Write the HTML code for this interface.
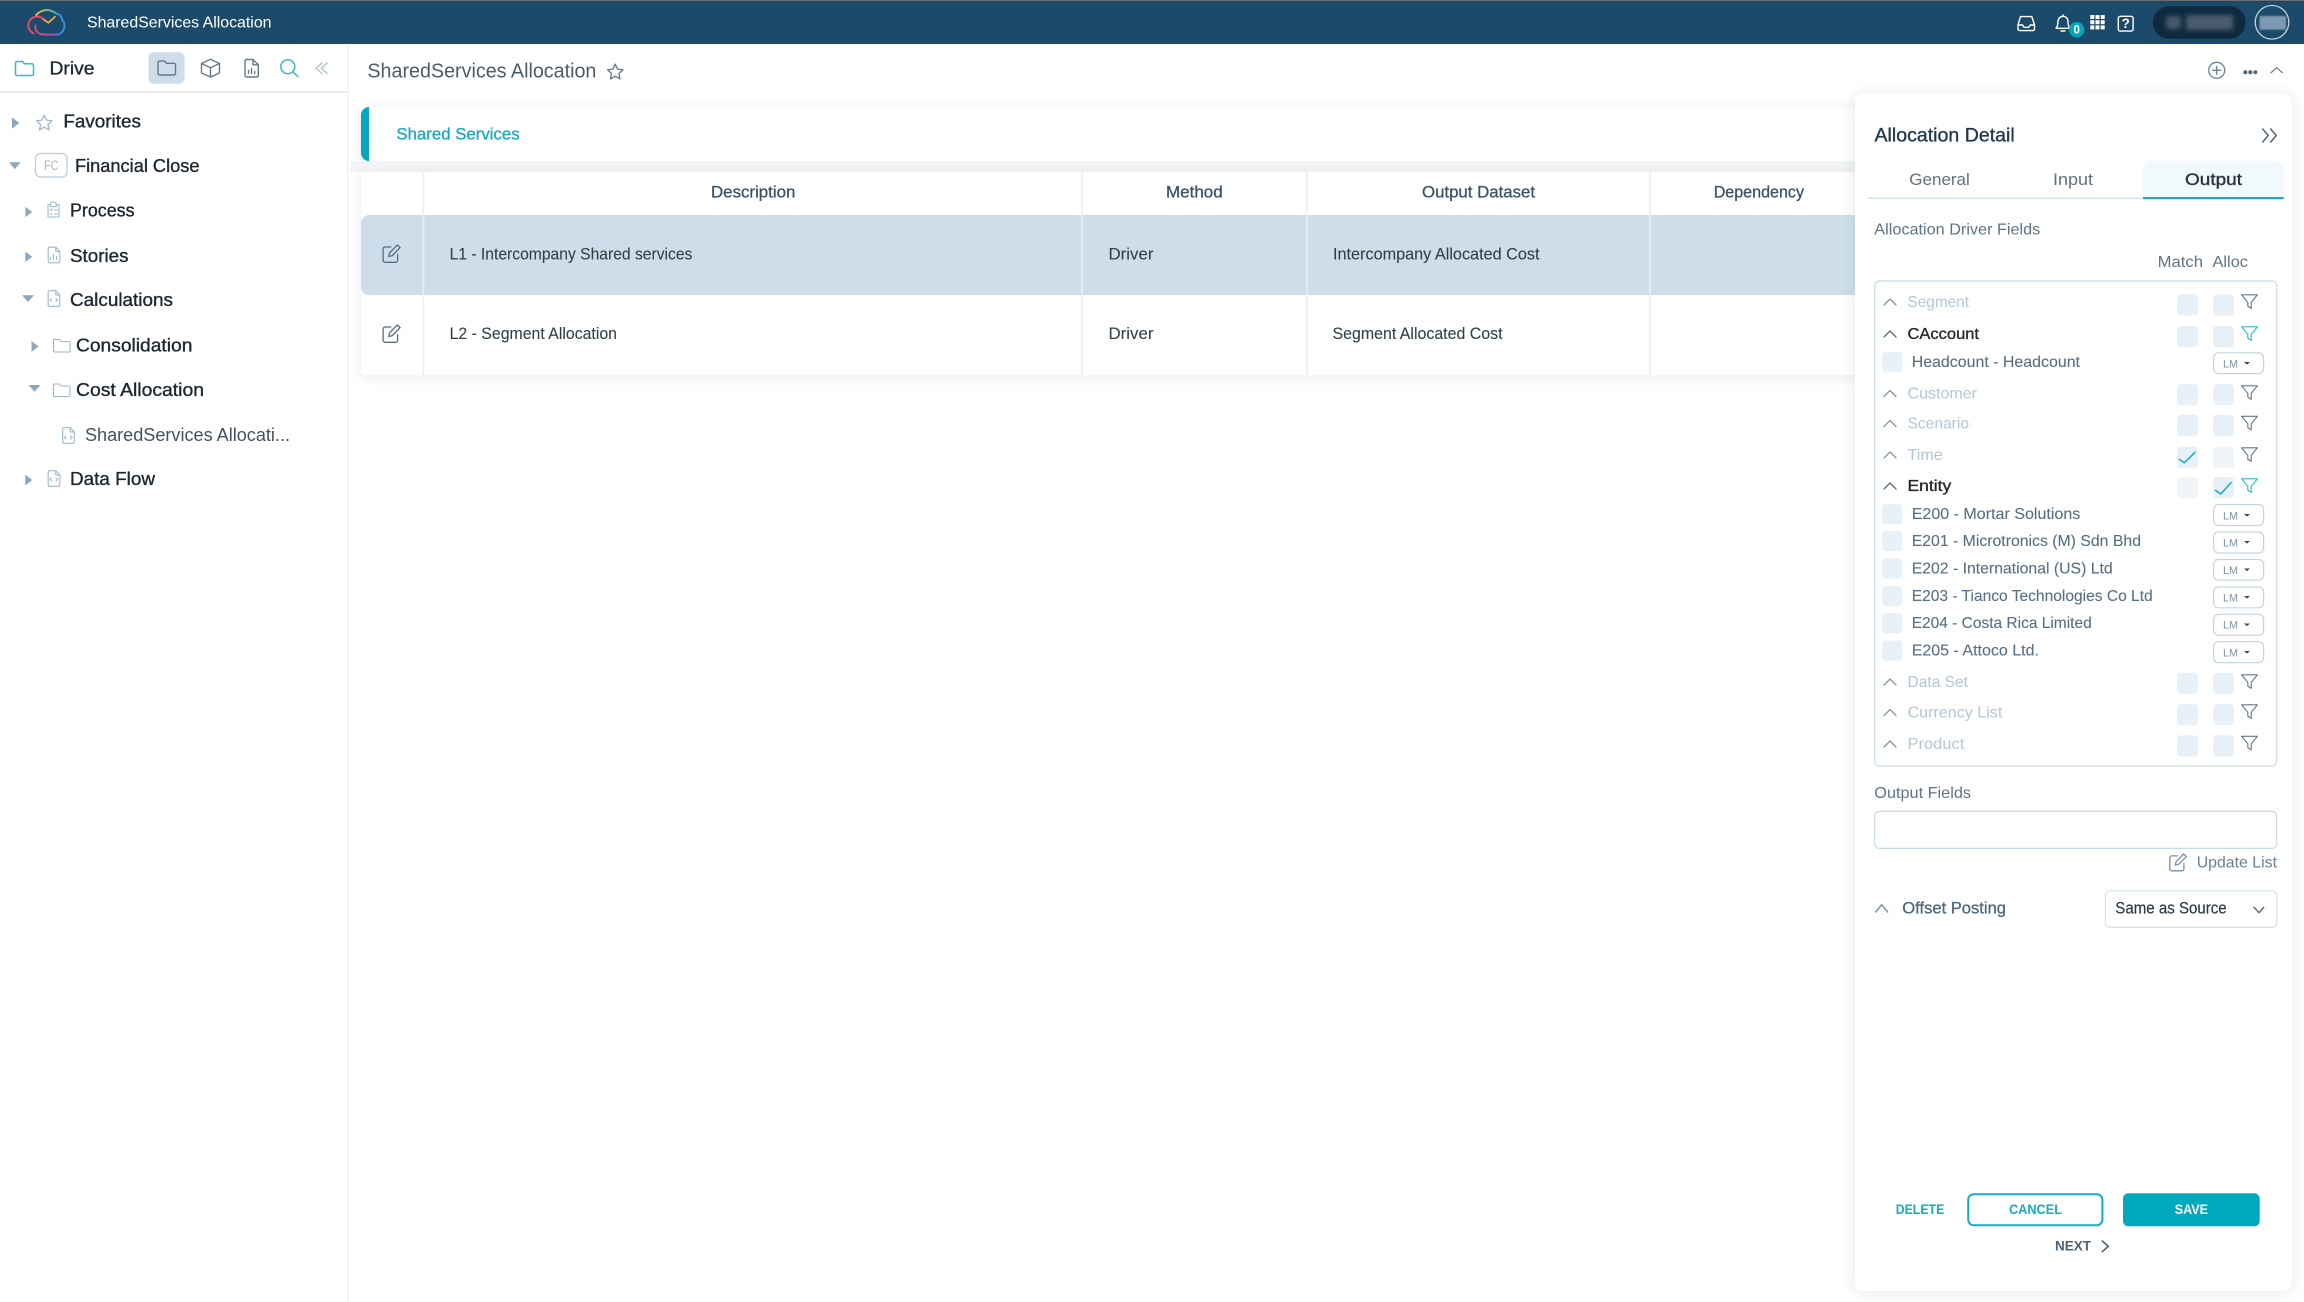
<!DOCTYPE html>
<html lang="en"><head><meta charset="utf-8"><title>SharedServices Allocation</title>
<style>
html,body{margin:0;padding:0;background:#fff;width:2304px;height:1302px;overflow:hidden}
svg{display:block}
text{font-family:"Liberation Sans",sans-serif;white-space:pre;transform:translateY(-.8px)}
.tree{font-size:18px;fill:#1c2730;stroke:#1c2730;stroke-width:.35}
.tbl{font-size:16.5px;fill:#333f49;stroke:#333f49;stroke-width:.1}
.th{font-size:16.5px;fill:#3a5268;stroke:#3a5268;stroke-width:.3}
.lab{font-size:16px;fill:#5d7488}
.dim{font-size:16px;fill:#b0c7d8}
.blk{font-size:16px;fill:#23292e;stroke:#23292e;stroke-width:.35}
.sub{font-size:16px;fill:#566f85;stroke:#566f85;stroke-width:.1}
.lm{font-size:11px;fill:#7e93a5}
.btn{font-size:14px;font-weight:700}
.ic{fill:none;stroke-linecap:round;stroke-linejoin:round}
</style></head><body>
<svg xmlns="http://www.w3.org/2000/svg" width="2304" height="1302" viewBox="0 0 2304 1302">
<defs>
<filter id="sh" x="-5%" y="-20%" width="110%" height="140%"><feDropShadow dx="0" dy="2" stdDeviation="6" flood-color="#31475a" flood-opacity=".09"/></filter>
<filter id="sp" x="-10%" y="-5%" width="120%" height="110%"><feDropShadow dx="0" dy="1" stdDeviation="7" flood-color="#31475a" flood-opacity=".12"/></filter>
<filter id="bl" x="-20%" y="-60%" width="140%" height="220%"><feGaussianBlur stdDeviation="2.4"/></filter>
<filter id="bl1"><feGaussianBlur stdDeviation=".7"/></filter>
<linearGradient id="lg1" x1="0" x2="1" y1="0" y2="0"><stop offset="0" stop-color="#f0b83f"/><stop offset="1" stop-color="#2fb4c9"/></linearGradient>
<linearGradient id="lg2" x1="1" x2="0" y1="0" y2="0"><stop offset="0" stop-color="#7c5bd6"/><stop offset="1" stop-color="#e8486f"/></linearGradient>
<symbol id="star" viewBox="0 0 24 24"><path fill="none" stroke-linejoin="round" stroke-width="1.7" d="M12 2.2l3 6.4 7 .9-5.2 4.8 1.4 7L12 17.8l-6.2 3.5 1.4-7L2 9.5l7-.9z"/></symbol>
<symbol id="fun" viewBox="0 0 18 16"><path fill="none" stroke-linejoin="round" stroke-width="1.2" d="M.7.7H17.3L10.8 8.6V15L7.2 12.6V8.6Z"/></symbol>
<symbol id="edit" viewBox="0 0 19 19"><g fill="none" stroke-width="1.3" stroke-linecap="round" stroke-linejoin="round"><path d="M8.5 3H2.7A2 2 0 0 0 .8 5v11.3a2 2 0 0 0 1.9 2h10.6a2 2 0 0 0 2-2V10.5"/><path d="M15 .9l2.8 2.7-7.8 8-3.6.9.9-3.7z"/></g></symbol>
<symbol id="doc" viewBox="0 0 13 17"><path fill="none" stroke-width="1.1" stroke-linejoin="round" d="M.7 2A1.3 1.3 0 0 1 2 .7h6.3l4 4.2V15a1.3 1.3 0 0 1-1.3 1.3H2A1.3 1.3 0 0 1 .7 15zM8.3.7v4.2h4"/></symbol>
</defs>

<rect width="2304" height="1302" fill="#fff"/>

<!-- top bar -->
<rect width="2304" height="44" fill="#1b4a6b"/>
<rect width="2304" height="1" fill="#6a6f73"/>
<g class="ic" stroke-width="1.9">
<path d="M36 15 Q46 5.5 57 14" stroke="url(#lg1)"/>
<path d="M57 13.5 Q62 15.5 62.2 20 Q65.5 22.5 64 28.5 Q62 34.5 56 34.6" stroke="#3b8de2"/>
<path d="M58 34.6 H44 Q39 34.5 36.5 31" stroke="url(#lg2)"/>
<path d="M33.5 33.5 Q27.5 30 28.5 23.5 Q30 17 37.5 16.5 Q42 17 45 20.5" stroke="#e8495c"/>
<path d="M43.5 19.5 L48.5 22.7 L55 16.7" stroke="#f0a233"/>
<path d="M35.5 25.5 Q35 29 36.5 31" stroke="#e8495c"/>
</g>
<text x="87" y="27.7" font-size="16" fill="#fff" textLength="184.5" lengthAdjust="spacingAndGlyphs" style="transform:none">SharedServices Allocation</text>
<g class="ic" stroke="#fff" stroke-width="1.4">
<path d="M2018 25 L2020.5 16.6 H2031.8 L2034.5 25 V29 a1.6 1.6 0 0 1-1.6 1.6 H2019.6 A1.6 1.6 0 0 1 2018 29 Z"/>
<path d="M2018 25 H2022.5 L2024 27.3 H2028.8 L2030.3 25 H2034.5"/>
<path d="M2056 28.3 c1.8-1.8 2-4 2-7 a5 5 0 0 1 10 0 c0 3 .2 5.2 2 7 Z"/>
<path d="M2061 31 h4 M2063 15 v1.3"/>
<rect x="2118.3" y="16.3" width="14.8" height="14.8" rx="2"/>
</g>
<circle cx="2076.7" cy="29.7" r="7.7" fill="#00a6ba"/>
<text x="2076.7" y="34.4" font-size="11.5" font-weight="700" fill="#fff" text-anchor="middle">0</text>
<g fill="#fff">
<rect x="2090.3" y="15" width="4" height="4"/><rect x="2095.5" y="15" width="4" height="4"/><rect x="2100.7" y="15" width="4" height="4"/>
<rect x="2090.3" y="20.2" width="4" height="4"/><rect x="2095.5" y="20.2" width="4" height="4"/><rect x="2100.7" y="20.2" width="4" height="4"/>
<rect x="2090.3" y="25.4" width="4" height="4"/><rect x="2095.5" y="25.4" width="4" height="4"/><rect x="2100.7" y="25.4" width="4" height="4"/>
</g>
<text x="2125.7" y="29" font-size="13.5" font-weight="700" fill="#fff" text-anchor="middle">?</text>
<rect x="2152.7" y="6.3" width="93" height="32.4" rx="16.2" fill="#0f2a3e"/>
<rect x="2166" y="16" width="15" height="13" rx="3" fill="#46586a" filter="url(#bl)"/>
<rect x="2186" y="15" width="47" height="15" rx="2" fill="#4a5c6e" filter="url(#bl)"/>
<circle cx="2272" cy="22.3" r="16.8" fill="#1b4a6b" stroke="#c5d0d8" stroke-width="1.3"/>
<rect x="2259.5" y="16" width="26.5" height="13.7" fill="#7d98b2" filter="url(#bl1)"/>

<!-- sidebar -->
<rect x="347" y="44" width="1.5" height="1258" fill="#eef2f5"/>
<rect x="0" y="91" width="347" height="2" fill="#e6edf3"/>
<g class="ic" stroke-width="1.5">
<path stroke="#35bcd0" d="M15.5 63a1.5 1.5 0 0 1 1.5-1.5h5.5l2 2.3H32a1.5 1.5 0 0 1 1.5 1.5V74a1.5 1.5 0 0 1-1.5 1.5H17a1.5 1.5 0 0 1-1.5-1.5z"/>
</g>
<text class="tree" x="49.5" y="75.3" textLength="45" lengthAdjust="spacingAndGlyphs">Drive</text>
<rect x="148.5" y="52.3" width="36" height="31.4" rx="5" fill="#cddeea"/>
<g class="ic" stroke="#64798b" stroke-width="1.4">
<path d="M158 62.5a1.5 1.5 0 0 1 1.5-1.5h5l2 2.3h7.5a1.5 1.5 0 0 1 1.5 1.5V73.5a1.5 1.5 0 0 1-1.5 1.5h-14.5a1.5 1.5 0 0 1-1.5-1.5z"/>
<path d="M210.5 59.3 L219.5 63.5 V73 L210.5 77 L201.5 73 V63.5Z M201.5 63.5 L210.5 67.8 L219.5 63.5 M210.5 67.8 V77"/>
<path d="M245 61a1.5 1.5 0 0 1 1.5-1.5h6.5l5.3 5.3V75.5a1.5 1.5 0 0 1-1.5 1.5h-10.3a1.5 1.5 0 0 1-1.5-1.5z M253 59.5v5.3h5.3"/>
<path d="M248.5 73.5v-3 M251.5 73.5v-5 M254.7 73.5v-2"/>
</g>
<g class="ic" stroke="#3bb6c9" stroke-width="1.5"><circle cx="287.8" cy="66.7" r="7"/><path d="M293 72 L298 76.7"/></g>
<path class="ic" stroke="#aabccb" stroke-width="1.2" d="M322 63 L316 68.3 L322 73.6 M327.3 63 L321.3 68.3 L327.3 73.6"/>

<g fill="#8ca9bf">
<path d="M12 117.3 L19.3 123 L12 128.7Z"/>
<path d="M9 162.3 H20.7 L14.7 169.3Z"/>
<path d="M25.3 206.7 L32.3 212 L25.3 217.3Z"/>
<path d="M25.3 251.5 L32.3 256.8 L25.3 262Z"/>
<path d="M22 295.3 H34 L28 302Z"/>
<path d="M31.5 341 L38.5 346.5 L31.5 352Z"/>
<path d="M28.6 385 H40.4 L34.5 391.7Z"/>
<path d="M25.3 474.5 L32.3 480 L25.3 485.5Z"/>
</g>
<use href="#star" x="35" y="113.5" width="18.5" height="18.5" stroke="#9db8cd"/>
<rect x="35.5" y="153.5" width="31.5" height="23.5" rx="5" fill="none" stroke="#b6cbdb" stroke-width="1.2"/>
<text x="44" y="170.8" font-size="13.5" fill="#a9bdcc" textLength="14.5" lengthAdjust="spacingAndGlyphs">FC</text>

<g class="ic" stroke="#9db8cd" stroke-width="1.1">
<path d="M48 204.5h2.5v-1a2 2 0 0 1 2-1.5h1.5a2 2 0 0 1 2 1.5v1h3v12.5H48z M50.5 204.5v2h6v-2 M50 209.5l1 1 1.5-1.5 M54.5 210h3 M50 214h2.5 M54.5 214h3"/>
<path d="M50.5 259.5v-2 M53.5 259.5v-5 M56.5 259.5v-3"/>
<path d="M51.5 298.5l-1.5 1.5 1.5 1.5 M56 298.5l1.5 1.5-1.5 1.5"/>
<path d="M53.5 341a1 1 0 0 1 1-1.5h4.5l2 2h8a1 1 0 0 1 1 1V351a1 1 0 0 1-1 1H54.5a1 1 0 0 1-1-1z"/>
<path d="M53.5 385.5a1 1 0 0 1 1-1.5h4.5l2 2h8a1 1 0 0 1 1 1V395.5a1 1 0 0 1-1 1H54.5a1 1 0 0 1-1-1z"/>
<path d="M66 436l-1.5 1.5 1.5 1.5 M70.5 436l1.5 1.5-1.5 1.5"/>
<path d="M51.5 478l-1.5 1.5 1.5 1.5 M56 478l1.5 1.5-1.5 1.5"/>
</g>
<use href="#doc" x="47.5" y="246.5" width="13" height="17" stroke="#9db8cd"/>
<use href="#doc" x="47.5" y="290" width="13" height="17" stroke="#9db8cd"/>
<use href="#doc" x="62" y="427" width="13" height="17" stroke="#9db8cd"/>
<use href="#doc" x="47.5" y="470" width="13" height="17" stroke="#9db8cd"/>

<text class="tree" x="63.4" y="128.3" textLength="77.5" lengthAdjust="spacingAndGlyphs">Favorites</text>
<text class="tree" x="75" y="172.7" textLength="124.5" lengthAdjust="spacingAndGlyphs">Financial Close</text>
<text class="tree" x="70" y="217.3" textLength="64.5" lengthAdjust="spacingAndGlyphs">Process</text>
<text class="tree" x="70" y="262.7" textLength="58.5" lengthAdjust="spacingAndGlyphs">Stories</text>
<text class="tree" x="70" y="306.7" textLength="103" lengthAdjust="spacingAndGlyphs">Calculations</text>
<text class="tree" x="76" y="352.3" textLength="116.4" lengthAdjust="spacingAndGlyphs">Consolidation</text>
<text class="tree" x="76" y="396.7" textLength="128" lengthAdjust="spacingAndGlyphs">Cost Allocation</text>
<text x="85" y="441.7" font-size="18" fill="#44525f" textLength="205" lengthAdjust="spacingAndGlyphs">SharedServices Allocati...</text>
<text class="tree" x="70" y="485.7" textLength="85" lengthAdjust="spacingAndGlyphs">Data Flow</text>

<!-- main -->
<text x="367.4" y="78.3" font-size="20" fill="#4a5c6c" textLength="229" lengthAdjust="spacingAndGlyphs">SharedServices Allocation</text>
<use href="#star" x="606" y="62.5" width="18.5" height="18.5" stroke="#66798a"/>
<g class="ic" stroke="#6b8296" stroke-width="1.3">
<circle cx="2216.7" cy="70.3" r="8"/><path d="M2216.7 66.3v8M2212.7 70.3h8"/>
<path d="M2271 72.7 L2276.7 67.7 L2282.3 72.7"/>
</g>
<g fill="#4e6478"><circle cx="2245.3" cy="72.3" r="2"/><circle cx="2250.3" cy="72.3" r="2"/><circle cx="2255.3" cy="72.3" r="2"/></g>

<path d="M369 107 H1870 V161 H369 A8 8 0 0 1 361 153 V115 A8 8 0 0 1 369 107Z" fill="#fff" filter="url(#sh)"/>
<rect x="350" y="161" width="1520" height="11" fill="#f3f5f7"/>
<path d="M361 153 V115 A8 8 0 0 1 369 107 V161 A8 8 0 0 1 361 153Z" fill="#00a9bd"/>
<text x="396.4" y="140.3" font-size="17" fill="#12abbf" stroke="#12abbf" stroke-width=".3" textLength="123.2" lengthAdjust="spacingAndGlyphs">Shared Services</text>

<rect x="361" y="172" width="1510" height="203" fill="#fff" filter="url(#sh)"/>
<path d="M369 215 H1870 V295 H369 A8 8 0 0 1 361 287 V223 A8 8 0 0 1 369 215Z" fill="#cddeea"/>
<g fill="#e6eff5"><rect x="422.7" y="172" width="1.6" height="203"/><rect x="1081.2" y="172" width="1.6" height="203"/><rect x="1306.2" y="172" width="1.6" height="203"/><rect x="1649.2" y="172" width="1.6" height="203"/></g>

<text class="th" x="711" y="198.3" textLength="84.4" lengthAdjust="spacingAndGlyphs">Description</text>
<text class="th" x="1166" y="198.3" textLength="56.7" lengthAdjust="spacingAndGlyphs">Method</text>
<text class="th" x="1422" y="198.3" textLength="113" lengthAdjust="spacingAndGlyphs">Output Dataset</text>
<text class="th" x="1713.7" y="198.3" textLength="90.3" lengthAdjust="spacingAndGlyphs">Dependency</text>

<use href="#edit" x="382.3" y="244" width="19" height="19" stroke="#566c7f"/>
<use href="#edit" x="382.3" y="324" width="19" height="19" stroke="#566c7f"/>
<text class="tbl" x="449.6" y="260.4" textLength="242.8" lengthAdjust="spacingAndGlyphs">L1 - Intercompany Shared services</text>
<text class="tbl" x="449.6" y="339.8" textLength="167.4" lengthAdjust="spacingAndGlyphs">L2 - Segment Allocation</text>
<text class="tbl" x="1108.5" y="260.4" textLength="45" lengthAdjust="spacingAndGlyphs">Driver</text>
<text class="tbl" x="1108.5" y="339.8" textLength="45" lengthAdjust="spacingAndGlyphs">Driver</text>
<text class="tbl" x="1333" y="260.4" textLength="206.5" lengthAdjust="spacingAndGlyphs">Intercompany Allocated Cost</text>
<text class="tbl" x="1332.5" y="339.8" textLength="170" lengthAdjust="spacingAndGlyphs">Segment Allocated Cost</text>

<!-- panel -->
<rect x="1855" y="94" width="437" height="1197" rx="9" fill="#fff" filter="url(#sp)"/>
<text x="1874.5" y="142.3" font-size="19.5" fill="#22384c" stroke="#22384c" stroke-width=".35" textLength="140.2" lengthAdjust="spacingAndGlyphs">Allocation Detail</text>
<path class="ic" stroke="#4d6477" stroke-width="1.5" d="M2262.7 129 L2268.3 135.5 L2262.7 142 M2270.7 129 L2276.3 135.5 L2270.7 142"/>
<path d="M2143 198 V168.7 A8 8 0 0 1 2151 160.7 H2275.7 A8 8 0 0 1 2283.7 168.7 V198Z" fill="#f2f9fc"/>
<rect x="1868" y="197.5" width="275" height="1.6" fill="#d6e6ee"/>
<rect x="2143" y="197" width="140.7" height="2.2" fill="#12adc1"/>
<text x="1909.3" y="186" font-size="17" fill="#62717e" textLength="60.5" lengthAdjust="spacingAndGlyphs">General</text>
<text x="2053" y="186" font-size="17" fill="#62717e" textLength="40" lengthAdjust="spacingAndGlyphs">Input</text>
<text x="2185" y="186" font-size="17" fill="#2a3740" stroke="#2a3740" stroke-width=".4" textLength="57" lengthAdjust="spacingAndGlyphs">Output</text>

<text class="lab" x="1874.3" y="235.3" textLength="166" lengthAdjust="spacingAndGlyphs">Allocation Driver Fields</text>
<text class="lab" x="2157.7" y="268" textLength="45.3" lengthAdjust="spacingAndGlyphs">Match</text>
<text class="lab" x="2212.5" y="268" textLength="35.5" lengthAdjust="spacingAndGlyphs">Alloc</text>
<rect x="1874.7" y="281" width="402" height="485" rx="5" fill="#fff" stroke="#c9dbe6" stroke-width="1.2"/>

<!-- chevrons -->
<g class="ic" stroke="#8496a5" stroke-width="1.3">
<path d="M1884 305 L1890 299 L1896 305"/>
<path d="M1884 396.5 L1890 390.5 L1896 396.5"/>
<path d="M1884 426.5 L1890 420.5 L1896 426.5"/>
<path d="M1884 458 L1890 452 L1896 458"/>
<path d="M1884 685 L1890 679 L1896 685"/>
<path d="M1884 715.5 L1890 709.5 L1896 715.5"/>
<path d="M1884 747 L1890 741 L1896 747"/>
</g>
<g class="ic" stroke="#5d7080" stroke-width="1.4">
<path d="M1884 337 L1890 331 L1896 337"/>
<path d="M1884 489 L1890 483 L1896 489"/>
</g>

<!-- headers -->
<text class="dim" x="1907.5" y="308" textLength="61.5" lengthAdjust="spacingAndGlyphs">Segment</text>
<text class="blk" x="1907.5" y="340" textLength="71.5" lengthAdjust="spacingAndGlyphs">CAccount</text>
<text class="dim" x="1907.5" y="399.3" textLength="69.5" lengthAdjust="spacingAndGlyphs">Customer</text>
<text class="dim" x="1907.5" y="429.3" textLength="61.5" lengthAdjust="spacingAndGlyphs">Scenario</text>
<text class="dim" x="1907.5" y="460.7" textLength="35.2" lengthAdjust="spacingAndGlyphs">Time</text>
<text class="blk" x="1907.5" y="491.7" textLength="43.8" lengthAdjust="spacingAndGlyphs">Entity</text>
<text class="dim" x="1907.5" y="688" textLength="60.5" lengthAdjust="spacingAndGlyphs">Data Set</text>
<text class="dim" x="1907.5" y="718.3" textLength="94.8" lengthAdjust="spacingAndGlyphs">Currency List</text>
<text class="dim" x="1907.5" y="750" textLength="56.8" lengthAdjust="spacingAndGlyphs">Product</text>

<!-- sub rows -->
<text class="sub" x="1911.7" y="368" textLength="168.3" lengthAdjust="spacingAndGlyphs">Headcount - Headcount</text>
<text class="sub" x="1911.7" y="520" textLength="168.6" lengthAdjust="spacingAndGlyphs">E200 - Mortar Solutions</text>
<text class="sub" x="1911.7" y="546.7" textLength="229.3" lengthAdjust="spacingAndGlyphs">E201 - Microtronics (M) Sdn Bhd</text>
<text class="sub" x="1911.7" y="574.3" textLength="201" lengthAdjust="spacingAndGlyphs">E202 - International (US) Ltd</text>
<text class="sub" x="1911.7" y="602" textLength="241" lengthAdjust="spacingAndGlyphs">E203 - Tianco Technologies Co Ltd</text>
<text class="sub" x="1911.7" y="628.7" textLength="180" lengthAdjust="spacingAndGlyphs">E204 - Costa Rica Limited</text>
<text class="sub" x="1911.7" y="656.3" textLength="127.3" lengthAdjust="spacingAndGlyphs">E205 - Attoco Ltd.</text>

<!-- checkboxes -->
<g fill="#e8f1f7">
<rect x="2177" y="294.3" width="21" height="21.3" rx="4"/><rect x="2213" y="294.3" width="21" height="21.3" rx="4"/>
<rect x="2177" y="326" width="21" height="21.3" rx="4"/><rect x="2213" y="326" width="21" height="21.3" rx="4"/>
<rect x="2177" y="384" width="21" height="21.3" rx="4"/><rect x="2213" y="384" width="21" height="21.3" rx="4"/>
<rect x="2177" y="415" width="21" height="21.3" rx="4"/><rect x="2213" y="415" width="21" height="21.3" rx="4"/>
<rect x="2177" y="446.7" width="21" height="21.3" rx="4"/><rect x="2213" y="446.7" width="21" height="21.3" rx="4" fill="#f0f5f9"/>
<rect x="2177" y="477" width="21" height="21.3" rx="4" fill="#f0f5f9"/><rect x="2213" y="477" width="21" height="21.3" rx="4"/>
<rect x="2177" y="672.7" width="21" height="21.3" rx="4"/><rect x="2213" y="672.7" width="21" height="21.3" rx="4"/>
<rect x="2177" y="704" width="21" height="21.3" rx="4"/><rect x="2213" y="704" width="21" height="21.3" rx="4"/>
<rect x="2177" y="735.3" width="21" height="21.3" rx="4"/><rect x="2213" y="735.3" width="21" height="21.3" rx="4"/>
<rect x="1882" y="351.7" width="20.3" height="20.3" rx="4"/>
<rect x="1882" y="504" width="20.3" height="20.3" rx="4"/>
<rect x="1882" y="530.7" width="20.3" height="20.3" rx="4"/>
<rect x="1882" y="558.3" width="20.3" height="20.3" rx="4"/>
<rect x="1882" y="586" width="20.3" height="20.3" rx="4"/>
<rect x="1882" y="613" width="20.3" height="20.3" rx="4"/>
<rect x="1882" y="640.5" width="20.3" height="20.3" rx="4"/>
</g>
<path class="ic" stroke="#14aec2" stroke-width="1.5" d="M2179.3 459.3 L2184.3 462.7 L2195 452.3 M2215.3 490.3 L2220.7 494 L2231 482.7"/>

<!-- funnels -->
<g stroke="#65798b">
<use href="#fun" x="2241" y="294" width="17" height="15.5"/>
<use href="#fun" x="2241" y="385" width="17" height="15.5"/>
<use href="#fun" x="2241" y="415.5" width="17" height="15.5"/>
<use href="#fun" x="2241" y="447" width="17" height="15.5"/>
<use href="#fun" x="2241" y="674" width="17" height="15.5"/>
<use href="#fun" x="2241" y="704" width="17" height="15.5"/>
<use href="#fun" x="2241" y="735.5" width="17" height="15.5"/>
</g>
<g stroke="#2dbccf">
<use href="#fun" x="2241" y="326" width="17" height="15.5"/>
<use href="#fun" x="2241" y="478" width="17" height="15.5"/>
</g>

<!-- LM buttons -->
<g fill="#fff" stroke="#c3d5e1" stroke-width="1.2">
<rect x="2213.6" y="352.8" width="50" height="20.8" rx="5"/>
<rect x="2213.6" y="504.5" width="50" height="21" rx="5"/>
<rect x="2213.6" y="532" width="50" height="21" rx="5"/>
<rect x="2213.6" y="559.5" width="50" height="20.6" rx="5"/>
<rect x="2213.6" y="587" width="50" height="20.8" rx="5"/>
<rect x="2213.6" y="614.3" width="50" height="21" rx="5"/>
<rect x="2213.6" y="641.7" width="50" height="21" rx="5"/>
</g>
<g>
<text class="lm" x="2223" y="368.3" textLength="15" lengthAdjust="spacingAndGlyphs">LM</text>
<text class="lm" x="2223" y="520.3" textLength="15" lengthAdjust="spacingAndGlyphs">LM</text>
<text class="lm" x="2223" y="547.3" textLength="15" lengthAdjust="spacingAndGlyphs">LM</text>
<text class="lm" x="2223" y="574.8" textLength="15" lengthAdjust="spacingAndGlyphs">LM</text>
<text class="lm" x="2223" y="602.3" textLength="15" lengthAdjust="spacingAndGlyphs">LM</text>
<text class="lm" x="2223" y="629.5" textLength="15" lengthAdjust="spacingAndGlyphs">LM</text>
<text class="lm" x="2223" y="657.1" textLength="15" lengthAdjust="spacingAndGlyphs">LM</text>
</g>
<g fill="#3b4a57">
<path d="M2244 362 h6 l-3 2.6z"/><path d="M2244 514 h6 l-3 2.6z"/><path d="M2244 541 h6 l-3 2.6z"/><path d="M2244 568.5 h6 l-3 2.6z"/><path d="M2244 596 h6 l-3 2.6z"/><path d="M2244 623.5 h6 l-3 2.6z"/><path d="M2244 651 h6 l-3 2.6z"/>
</g>

<!-- output fields -->
<text class="lab" x="1874.3" y="799" textLength="96.7" lengthAdjust="spacingAndGlyphs">Output Fields</text>
<rect x="1874.6" y="811.4" width="402" height="37" rx="5" fill="#fff" stroke="#c9dbe6" stroke-width="1.2"/>
<use href="#edit" x="2169" y="853" width="18.5" height="18.5" stroke="#7a8fa1"/>
<text x="2196.7" y="868.3" font-size="16" fill="#6a8299" textLength="80.3" lengthAdjust="spacingAndGlyphs">Update List</text>
<path class="ic" stroke="#7d93a5" stroke-width="1.5" d="M1875.7 912 L1881.7 904.7 L1887.7 912"/>
<text x="1902.3" y="914.3" font-size="17" fill="#4c6880" stroke="#4c6880" stroke-width=".3" textLength="103.7" lengthAdjust="spacingAndGlyphs">Offset Posting</text>
<rect x="2105.3" y="890.8" width="171.5" height="36.6" rx="5" fill="#fff" stroke="#d4e1ea" stroke-width="1.2"/>
<text x="2115.3" y="914.3" font-size="17" fill="#2d3a44" stroke="#2d3a44" stroke-width=".2" textLength="111.4" lengthAdjust="spacingAndGlyphs">Same as Source</text>
<path class="ic" stroke="#4f6375" stroke-width="1.4" d="M2254 907.3 L2259 912.7 L2263.7 907.3"/>

<!-- buttons -->
<text class="btn" x="1895.7" y="1214.7" fill="#12adc1" textLength="48.6" lengthAdjust="spacingAndGlyphs">DELETE</text>
<rect x="1968.2" y="1194.2" width="134.2" height="31" rx="5.5" fill="#fff" stroke="#12adc1" stroke-width="2"/>
<text class="btn" x="2009" y="1214.7" fill="#12adc1" textLength="53" lengthAdjust="spacingAndGlyphs">CANCEL</text>
<rect x="2123" y="1193.3" width="136.7" height="33" rx="5.5" fill="#00a9bd"/>
<text class="btn" x="2174.7" y="1214.7" fill="#fff" textLength="33.3" lengthAdjust="spacingAndGlyphs">SAVE</text>
<text class="btn" x="2055" y="1251.3" fill="#4c6178" textLength="36" lengthAdjust="spacingAndGlyphs">NEXT</text>
<path class="ic" stroke="#4c6178" stroke-width="1.6" d="M2102.3 1241 L2108.3 1246.3 L2102.3 1251.7"/>
</svg>
</body></html>
